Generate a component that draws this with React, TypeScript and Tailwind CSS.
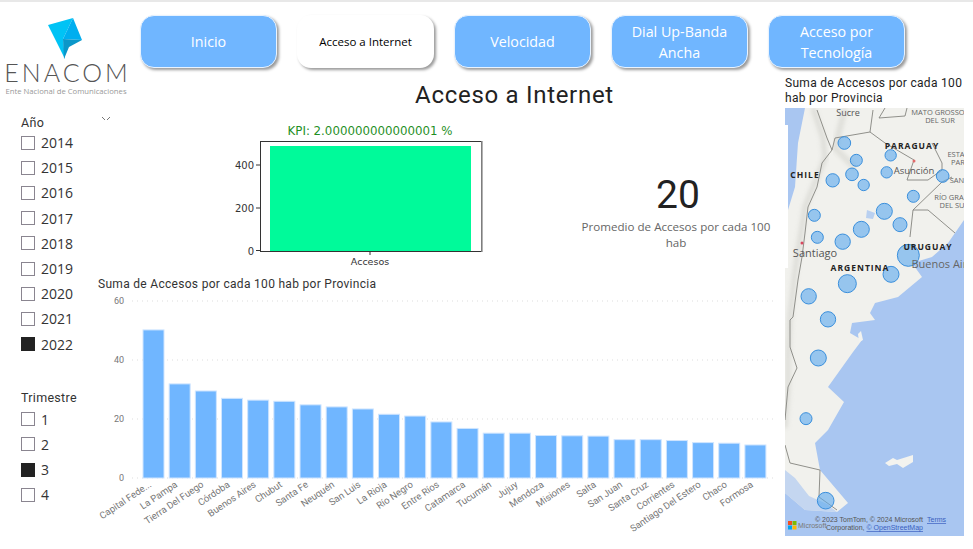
const navItems = ["Inicio", "Acceso a Internet", "Velocidad", "Dial Up-Banda Ancha", "Acceso por Tecnología"];
const years = [2014, 2015, 2016, 2017, 2018, 2019, 2020, 2021, 2022];
const quarters = [1, 2, 3, 4];

const provinces: [string, number][] = [
  ["Capital Fede...", 50.2], ["La Pampa", 31.9], ["Tierra Del Fuego", 29.5], ["Córdoba", 27], ["Buenos Aires", 26.4],
  ["Chubut", 26], ["Santa Fe", 24.8], ["Neuquén", 24.1], ["San Luis", 23.4], ["La Rioja", 21.6], ["Río Negro", 21],
  ["Entre Ríos", 19], ["Catamarca", 16.8], ["Tucumán", 15.2], ["Jujuy", 15.2], ["Mendoza", 14.4], ["Misiones", 14.3],
  ["Salta", 14.2], ["San Juan", 13], ["Santa Cruz", 13], ["Corrientes", 12.7], ["Santiago Del Estero", 12], ["Chaco", 11.8], ["Formosa", 11.2],
];

// zoom coordinates of the bubbles, x / y / r
const bubbles = [
  [178, 129, 19], [214, 181, 18], [201, 223, 19], [143, 241, 20], [236, 255, 17], [317, 166, 17], [305, 217, 17],
  [473, 228, 19], [385, 289, 18], [88, 346, 18], [97, 412, 18], [298, 334, 24], [345, 374, 21], [229, 388, 24],
  [173, 425, 23], [370, 466, 33], [318, 523, 24], [187, 551, 27], [71, 589, 23], [129, 658, 23],
  [100, 774, 24], [63, 956, 18], [122, 1202, 25],
];

const mapLabels: [string, number, number, string][] = [
  ["Sucre", 63, 8, "text-[9px] fill-[#555]"],
  ["MATO GROSSO", 153, 7, "text-[7.5px] fill-[#666]"],
  ["DEL SUR", 155, 15, "text-[7.5px] fill-[#666]"],
  ["ESTA", 171, 49, "text-[7.5px] fill-[#666]"],
  ["PAR", 173, 57, "text-[7.5px] fill-[#666]"],
  ["SAN", 172, 75, "text-[7.5px] fill-[#666]"],
  ["RÍO GRA", 164, 92, "text-[7.5px] fill-[#666]"],
  ["DEL SU", 167, 100, "text-[7.5px] fill-[#666]"],
  ["Asunción", 129, 66, "text-[9.5px] fill-[#555]"],
  ["Santiago", 30, 149, "text-[11px] fill-[#555]"],
  ["Buenos Aires", 160, 160, "text-[11px] fill-[#666]"],
];

const boldLabels: [string, number, number][] = [
  ["PARAGUAY", 127, 41], ["CHILE", 20, 70], ["URUGUAY", 143, 142], ["ARGENTINA", 75, 163],
];

function Logo() {
  return <div className="w-[122px] flex flex-col items-center">
    <svg width="36" height="42" viewBox="0 0 36 42" className="mt-[1px] mr-[1px]">
      <polygon points="0,7 25,0 15,21 17,41" fill="#00c3f5" />
      <polygon points="25,0 34,22 15,21" fill="#00aeef" />
      <polygon points="34,22 21,29 16,41 15,21" fill="#0b97c9" />
    </svg>
    <div className="font-['Lato',sans-serif] font-light text-[25px] leading-[24px] tracking-[3px] text-[#555] whitespace-nowrap ml-[3px]">ENACOM</div>
    <div className="font-['Open_Sans',sans-serif] text-[7.7px] leading-[10px] text-[#999] mt-[2px] whitespace-nowrap">Ente Nacional de Comunicaciones</div>
  </div>
}

function NavButton({ label, active }: { label: string, active: boolean }) {
  if (active) {
    return <div className="w-[137px] h-[53px] rounded-[14px] bg-white shadow-[2px_2px_3px_#9a9a9a] flex items-center justify-center text-center font-['Open_Sans',sans-serif] text-[11.5px] text-black">
      {label}
    </div>
  }
  return <div className="w-[137px] h-[53px] rounded-[14px] bg-[#70b6ff] border border-[#e8f3ff] shadow-[2px_2px_3px_#9a9a9a] flex items-center justify-center text-center font-['Open_Sans',sans-serif] text-[14.3px] leading-[21px] text-white px-3">
    {label}
  </div>
}

function CheckRow({ label, checked }: { label: number, checked: boolean }) {
  return <div className="flex items-center h-[25.2px] gap-[6px]">
    <div className={checked ? "w-[14px] h-[14px] bg-[#222]" : "w-[14px] h-[14px] border border-[#8a8590] bg-white"} />
    <span className="text-[14px] text-[#333] font-['Open_Sans',sans-serif]">{label}</span>
  </div>
}

function Filters() {
  return <div className="w-[98px] pl-[21px] relative">
    <svg width="10" height="5" viewBox="0 0 10 5" className="absolute left-[101px] top-[4px]">
      <path d="M1 1l3 3M6 4l3-3" stroke="#777" fill="none" />
    </svg>
    <div className="text-[12.5px] leading-[18px] text-[#333] font-['Roboto',sans-serif] tracking-[0.3px] pt-[2px] h-[18px]">Año</div>
    <div>{years.map(y => <CheckRow key={y} label={y} checked={y === 2022} />)}</div>
    <div className="text-[12.5px] leading-[18px] text-[#333] font-['Roboto',sans-serif] tracking-[0.3px] mt-[32px]">Trimestre</div>
    <div>{quarters.map(q => <CheckRow key={q} label={q} checked={q === 3} />)}</div>
  </div>
}

function KpiChart() {
  return <svg width="265" height="152" viewBox="0 0 265 152" className="font-['DejaVu_Sans',sans-serif] shrink-0">
    <text x="150" y="20" textAnchor="middle" className="text-[11.8px] fill-[#1f8f1f]">KPI: 2.000000000000001 %</text>
    <rect x="40.5" y="26.5" width="221" height="110" fill="white" stroke="#333" />
    <rect x="50" y="31" width="201" height="105" fill="#00fa9a" />
    <line x1="262" y1="26" x2="262" y2="137" stroke="#999" strokeWidth="1.5" />
    {[["400", 50], ["200", 93], ["0", 135.5]].map(([t, y]) => <g key={t}>
      <line x1="36" x2="40" y1={y} y2={y} stroke="#333" />
      <text x="34" y={Number(y) + 4} textAnchor="end" className="text-[10px] fill-[#333]">{t}</text>
    </g>)}
    <line x1="150" x2="150" y1="137" y2="140" stroke="#333" />
    <text x="150" y="150" textAnchor="middle" className="text-[9.5px] fill-[#333]">Accesos</text>
  </svg>
}

function BarChart() {
  const y0 = 185;
  const scale = 2.95;
  return <svg width="687" height="256" viewBox="0 0 687 256" className="font-['Roboto',sans-serif] block">
    {[60, 40, 20, 0].map(v => <g key={v}>
      <line x1="34" x2="677" y1={y0 - v * scale} y2={y0 - v * scale} stroke="#ddd" strokeDasharray="1 4" />
      <text x="26" y={y0 - v * scale + 3} textAnchor="end" className="text-[9px] fill-[#777]">{v}</text>
    </g>)}
    {provinces.map(([name, v], i) => {
      const x = 45 + i * 26.17;
      return <g key={name}>
        <rect x={x} y={y0 - v * scale} width="21" height={v * scale} fill="#70b6ff" stroke="#cfe5ff" strokeWidth="1" />
        <text x={x + 9} y={y0 + 8} textAnchor="end" transform={`rotate(-34 ${x + 9} ${y0 + 8})`} className="text-[9.5px] fill-[#777]">{name}</text>
      </g>
    })}
  </svg>
}

function MapView() {
  return <svg width="179" height="428" viewBox="0 0 179 428" className="font-['Open_Sans',sans-serif] block">
    <defs>
      <filter id="soft"><feGaussianBlur stdDeviation="2" /></filter>
    </defs>
    <rect width="179" height="428" fill="#a9c6f1" />
    <polygon fill="#f1f1ed" points="20,0 13,35 10,79 3,102 0,135 0,385 20,402 52,404 63,395 35,362 30,335 43,322 59,294 43,279 68,244 77,232 65,225 67,215 90,212 85,205 90,195 113,189 137,169 127,155 147,149 163,135 170,125 179,112 179,0" />
    <polygon fill="#f3f3ef" points="100,355 108,350 112,352 128,347 128,354 118,360 112,356 104,358" />
    <polygon fill="#f3f3ef" points="73,226 76,223 78,232 74,234" />
    <polyline fill="none" stroke="#c9c9c3" strokeWidth="5" opacity="0.5" filter="url(#soft)" points="28,0 38,30 40,50 28,79 20,99 16,125 12,149 9,172 5,209 3,250 3,280 0,320" />
    <polyline fill="none" stroke="#d0d0ca" strokeWidth="6" opacity="0.55" filter="url(#soft)" points="60,0 50,40 70,60" />
    <polygon fill="#b9d0f0" points="0,385 0,362 10,370 24,388 42,396 52,404 20,402" opacity="0.8" />
    <polygon fill="#b9d0f0" points="82,102 90,105 88,111 81,110" />
    <g fill="none" stroke="#85857f" strokeWidth="0.9">
      <polyline points="32,2 42,30 47,42 37,55 32,79 23,99 20,125 17,149 13,172 8,209 5,212 5,239 12,260 3,279 0,312" />
      <polyline points="0,337 5,355 35,362 34,389 52,402" />
      <polyline points="88,2 85,24 50,30 47,42" />
      <polyline points="85,24 100,35 129,52 122,72 143,72 157,62 157,55 147,35" />
      <polyline points="125,129 128,102 157,74 167,69" />
      <polyline points="128,102 143,102 170,125" />
      <polyline points="100,0 94,10 120,8 122,0" />
    </g>
    {bubbles.map(([x, y, r], i) => <circle key={i} cx={x / 3} cy={y / 3 - 8} r={r / 3} fill="#5aa9ee" fillOpacity="0.6" stroke="#3a8fdc" strokeWidth="1" />)}
    <circle cx="129" cy="53" r="1.5" fill="#e06a6a" />
    <circle cx="17" cy="135" r="1.5" fill="#d9485f" />
    {mapLabels.map(([t, x, y, cls]) => <text key={t} x={x} y={y} textAnchor="middle" className={cls}>{t}</text>)}
    {boldLabels.map(([t, x, y]) => <text key={t} x={x} y={y} textAnchor="middle" letterSpacing="1" className="text-[8.5px] font-bold fill-[#222]">{t}</text>)}
    <g>
      <rect x="3" y="413" width="4" height="4" fill="#f25022" />
      <rect x="7.5" y="413" width="4" height="4" fill="#7fba00" />
      <rect x="3" y="417.5" width="4" height="4" fill="#00a4ef" />
      <rect x="7.5" y="417.5" width="4" height="4" fill="#ffb900" />
    </g>
    <g className="text-[7px] font-['Liberation_Sans',sans-serif]">
      <text x="13" y="420" className="fill-[#777]">Microsoft</text>
      <text x="30" y="414" className="fill-[#555]">© 2023 TomTom, © 2024 Microsoft</text>
      <text x="142" y="414" className="fill-[#3b5fc0]" textDecoration="underline">Terms</text>
      <text x="41" y="422" className="fill-[#555]">Corporation, <tspan className="fill-[#3b5fc0]" textDecoration="underline">© OpenStreetMap</tspan></text>
    </g>
  </svg>
}

export default function App() {
  return <div className="w-[973px] h-[549px] overflow-hidden bg-white border-t-2 border-[#e8e8e8]">
    <div className="flex h-[73px] pl-[5px] pt-[13px]">
      <div className="mt-[2px]"><Logo /></div>
      <div className="flex gap-[20px] ml-[13px]">
        {navItems.map(n => <NavButton key={n} label={n} active={n === "Acceso a Internet"} />)}
      </div>
    </div>
    <div className="flex">
      <div className="w-[785px]">
        <div className="flex justify-center pl-[244px] h-[37px] pt-[2px]">
          <h1 className="text-[24px] leading-[36px] font-normal text-[#222] font-['Roboto',sans-serif] tracking-[0.7px]">Acceso a Internet</h1>
        </div>
        <div className="flex">
          <Filters />
          <div className="flex-1">
            <div className="flex h-[166px] pl-[122px] pt-[3px]">
              <KpiChart />
              <div className="w-[196px] ml-[93px] flex flex-col items-center pt-[58px]">
                <div className="text-[39px] leading-[44px] text-[#222] font-['Roboto',sans-serif] ml-[4px]">20</div>
                <div className="text-[11.6px] leading-[16px] text-center text-[#666] font-['Open_Sans',sans-serif] mt-[2px]">Promedio de Accesos por cada 100 hab</div>
              </div>
            </div>
            <div className="text-[12px] leading-[16px] text-[#333] font-['Roboto',sans-serif] tracking-[0.3px] mt-[-2px] mb-[1px]">Suma de Accesos por cada 100 hab por Provincia</div>
            <BarChart />
          </div>
        </div>
      </div>
      <div className="w-[179px]">
        <div className="text-[12px] leading-[15px] h-[33px] pt-[1px] text-[#222] font-['Roboto',sans-serif] tracking-[0.3px]">Suma de Accesos por cada 100 hab por Provincia</div>
        <div className="relative">
          <MapView />
          <div className="absolute left-0 top-[17px] w-[3px] h-[143px] bg-white" />
        </div>
      </div>
    </div>
  </div>
}
